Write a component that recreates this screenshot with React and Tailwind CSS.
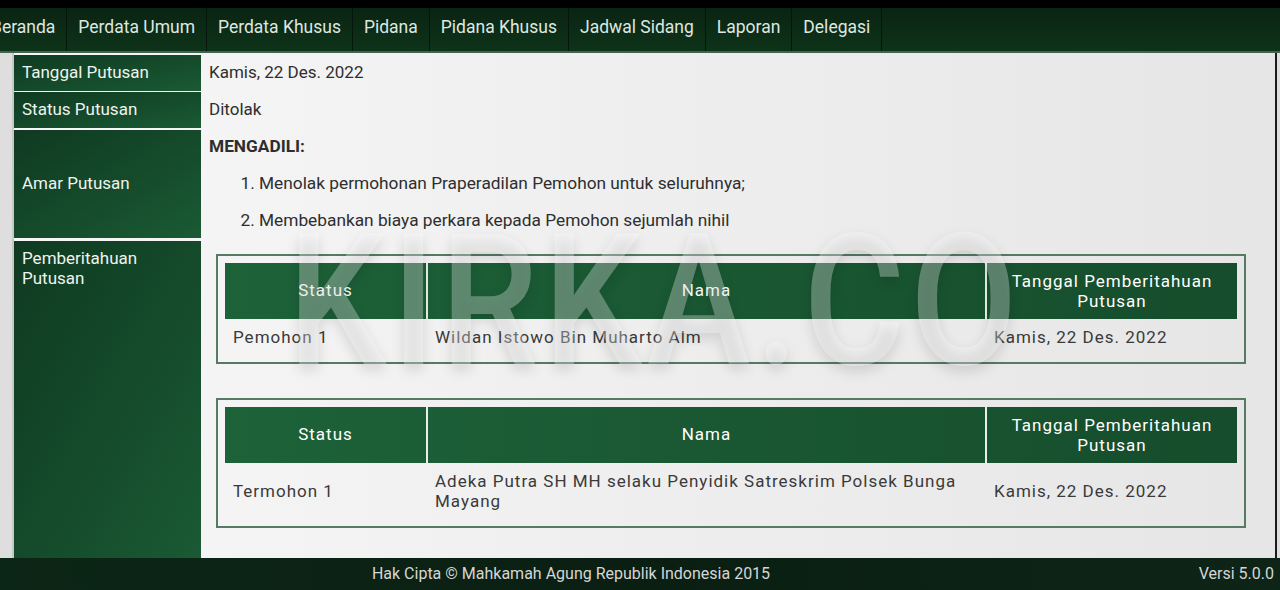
import React from 'react'

const navItems = ['Beranda', 'Perdata Umum', 'Perdata Khusus', 'Pidana', 'Pidana Khusus', 'Jadwal Sidang', 'Laporan', 'Delegasi']

const notices = [
  { status: 'Pemohon 1', nama: 'Wildan Istowo Bin Muharto Alm', tanggal: 'Kamis, 22 Des. 2022' },
  { status: 'Termohon 1', nama: 'Adeka Putra SH MH selaku Penyidik Satreskrim Polsek Bunga Mayang', tanggal: 'Kamis, 22 Des. 2022' },
]

// Label cell on the left of each detail row
function Label({ children, className = '' }) {
  return (
    <div className={`w-[187px] shrink-0 bg-gradient-to-br from-[#0f3a21] to-[#1a5a34] text-[#eef3ef] text-[17px] px-2 ${className}`}>
      {children}
    </div>
  )
}

function NoticeTable({ row }) {
  return (
    <div className="border-2 border-[#567a64] p-[7px] mb-[34px]">
      <table className="w-full border-collapse tracking-[1px]">
        <thead>
          <tr className="h-[56px] bg-gradient-to-r from-[#1d6239] to-[#164d2c] text-white text-[17px] font-normal">
            <th className="w-[202px] font-normal border-r-2 border-[#e8efea]">Status</th>
            <th className="font-normal border-r-2 border-[#e8efea]">Nama</th>
            <th className="w-[251px] font-normal leading-[20px]">Tanggal Pemberitahuan<br />Putusan</th>
          </tr>
        </thead>
        <tbody>
          <tr className="text-[17px] leading-[20px] text-[#3a3a3a]">
            <td className="px-2 py-[8px]">{row.status}</td>
            <td className="px-2 py-[8px]">{row.nama}</td>
            <td className="px-2 py-[8px]">{row.tanggal}</td>
          </tr>
        </tbody>
      </table>
    </div>
  )
}

export default function App() {
  return (
    <div className="w-[1280px] h-[590px] bg-black flex flex-col overflow-hidden relative font-['Roboto',sans-serif]">
      <div className="h-[8px] bg-black shrink-0" />
      <nav className="h-[45px] shrink-0 flex bg-gradient-to-b from-[#0a2413] to-[#0e3319] border-b-2 border-[#3f6450] -ml-[20px]">
        {navItems.map(item => (
          <div key={item} className="px-[11px] pb-[4px] flex items-center text-[17.5px] text-[#dfe7e1] border-r border-[#05170b]">
            {item}
          </div>
        ))}
      </nav>

      <div className="flex-1 min-h-0 bg-[#dedede] pl-[12px] pr-[3px] overflow-hidden">
        <div className="h-full overflow-hidden border-l-2 border-[#c8c8c8] border-r-2 border-r-[#1b1b1b] bg-gradient-to-r from-[#f7f7f7] to-[#e6e6e6] flex flex-col pt-[2px]">
          <div className="flex h-[36px] shrink-0">
            <Label className="flex items-center">Tanggal Putusan</Label>
            <div className="px-2 flex items-center text-[17px] text-[#2e2e2e]">Kamis, 22 Des. 2022</div>
          </div>
          <div className="flex h-[36px] shrink-0 mt-[1px]">
            <Label className="flex items-center">Status Putusan</Label>
            <div className="px-2 flex items-center text-[17px] text-[#2e2e2e]">Ditolak</div>
          </div>
          <div className="flex h-[108px] shrink-0 mt-[2px]">
            <Label className="flex items-center">Amar Putusan</Label>
            <div className="px-2 pt-[5px] text-[17.3px] text-[#2e2e2e]">
              <div className="font-bold leading-[22px]">MENGADILI:</div>
              <ol className="list-decimal pl-[50px] mt-[15px] leading-[22px] space-y-[15px]">
                <li>Menolak permohonan Praperadilan Pemohon untuk seluruhnya;</li>
                <li>Membebankan biaya perkara kepada Pemohon sejumlah nihil</li>
              </ol>
            </div>
          </div>
          <div className="flex flex-1 shrink-0 mt-[3px]">
            <Label className="pt-[7px] leading-[20px]">Pemberitahuan<br />Putusan</Label>
            <div className="flex-1 pl-[15px] pr-[29px] pt-[13px]">
              {notices.map(n => <NoticeTable key={n.status} row={n} />)}
            </div>
          </div>
        </div>
      </div>

      <footer className="h-[32px] shrink-0 flex items-center bg-gradient-to-r from-[#0c2616] via-[#0a1f12] to-[#0d2417] text-[16px] text-[#d6d6d6]">
        <div className="w-[1142px] text-center">Hak Cipta © Mahkamah Agung Republik Indonesia 2015</div>
        <div className="flex-1 text-right pr-[6px]">Versi 5.0.0</div>
      </footer>

      {/* watermark */}
      <div className="absolute left-[288px] top-[202px] origin-left scale-x-[0.85] text-[183px] leading-[200px] font-medium tracking-[6px] text-white/30 [text-shadow:0_6px_14px_rgba(0,0,0,0.12)] pointer-events-none select-none">
        KIRKA.CO
      </div>
    </div>
  )
}
